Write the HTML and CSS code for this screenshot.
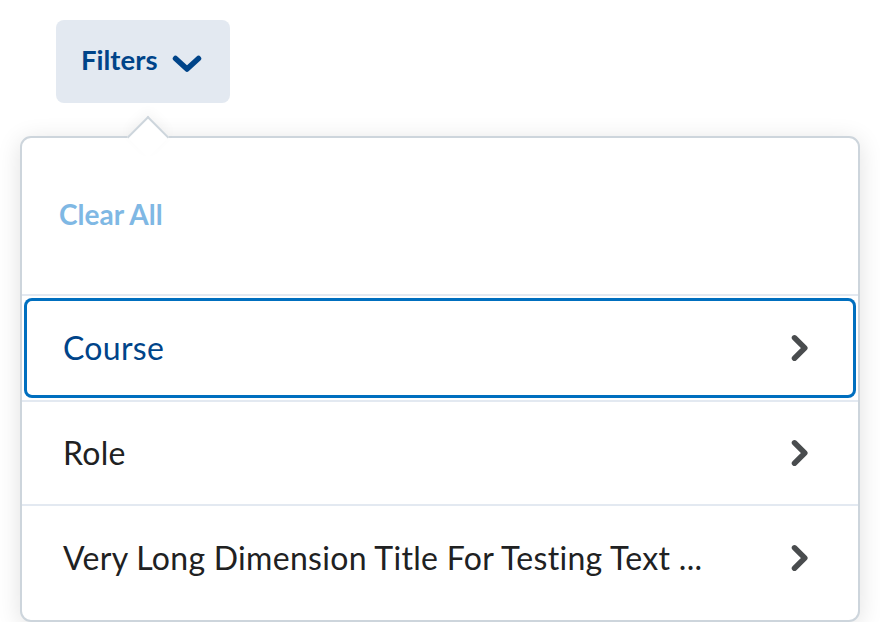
FILE: index.html
```html
<!DOCTYPE html>
<html>
<head>
<meta charset="utf-8">
<link rel="stylesheet" href="styles.css">
</head>
<body>
<div class="page">
  <button class="filters-btn">
    <span class="filters-label">Filters</span>
    <svg class="chev-down" width="30" height="20" viewBox="0 0 30 20"><path d="M3.5 4.5 L15 15 L26.5 4.5" fill="none" stroke="#004489" stroke-width="5.5" stroke-linecap="round" stroke-linejoin="round"/></svg>
  </button>
  <div class="dropdown">
    <div class="pointer"></div>
    <div class="clear-section"><span class="clear-all">Clear All</span></div>
    <div class="row">
      <div class="item focused"><span class="item-text">Course</span>
        <svg class="chev-right" width="20" height="30" viewBox="0 0 20 30"><path d="M4.5 4.8 L14.8 15 L4.5 25.2" fill="none" stroke="#494c4e" stroke-width="5.5" stroke-linecap="round" stroke-linejoin="round"/></svg>
      </div>
    </div>
    <div class="row mid">
      <div class="item"><span class="item-text dark">Role</span>
        <svg class="chev-right" width="20" height="30" viewBox="0 0 20 30"><path d="M4.5 4.8 L14.8 15 L4.5 25.2" fill="none" stroke="#494c4e" stroke-width="5.5" stroke-linecap="round" stroke-linejoin="round"/></svg>
      </div>
    </div>
    <div class="row">
      <div class="item"><span class="item-text dark">Very Long Dimension Title For Testing Text ...</span>
        <svg class="chev-right" width="20" height="30" viewBox="0 0 20 30"><path d="M4.5 4.8 L14.8 15 L4.5 25.2" fill="none" stroke="#494c4e" stroke-width="5.5" stroke-linecap="round" stroke-linejoin="round"/></svg>
      </div>
    </div>
  </div>
</div>
</body>
</html>
```

FILE: styles.css
```css
html, body {
  margin: 0;
  padding: 0;
  background: #ffffff;
}
body {
  font-family: Lato, "Noto Sans", sans-serif;
}
.page {
  padding: 20px 0 0 20px;
  width: 840px;
}
.filters-btn {
  margin-left: 36px;
  width: 174px;
  height: 83px;
  border: none;
  border-radius: 8px;
  background: #e3e9f1;
  display: flex;
  align-items: center;
  padding: 0 0 0 25px;
  font-family: inherit;
  cursor: pointer;
}
.filters-label {
  font-weight: 700;
  font-size: 27.5px;
  color: #004489;
  margin-top: -4px;
}
.chev-down {
  margin-left: 15px;
  margin-top: 4px;
}
.dropdown {
  position: relative;
  margin-top: 33px;
  border: 2px solid #cdd5dc;
  border-radius: 11px;
  background: #fff;
  box-shadow: 0 4px 24px rgba(0, 0, 0, 0.12);
  padding-bottom: 10px;
}
.pointer {
  position: absolute;
  left: 111px;
  top: -16px;
  width: 28px;
  height: 28px;
  background: #fff;
  border-top: 2px solid #cdd5dc;
  border-left: 2px solid #cdd5dc;
  transform: rotate(45deg);
  box-shadow: -4px -4px 12px rgba(0, 0, 0, 0.04);
}
.clear-section {
  height: 156px;
  display: flex;
  align-items: center;
  padding-left: 37px;
}
.clear-all {
  font-weight: 700;
  font-size: 28px;
  color: #7fb8e4;
  margin-top: -4px;
}
.row {
  border-top: 2px solid #e3e9f1;
  height: 106px;
  padding: 2px;
  box-sizing: border-box;
  display: flex;
}
.row.mid {
  height: 104px;
}
.item {
  flex: 1;
  display: flex;
  align-items: center;
  justify-content: space-between;
  padding: 0 46px 0 39px;
  border-radius: 8px;
}
.item.focused {
  box-shadow: inset 0 0 0 3px #006fbf;
}
.item-text {
  font-size: 32px;
  letter-spacing: 0.3px;
  color: #004489;
  margin-top: -2px;
}
.item-text.dark {
  color: #202122;
}
.chev-right {
  display: block;
}
```
